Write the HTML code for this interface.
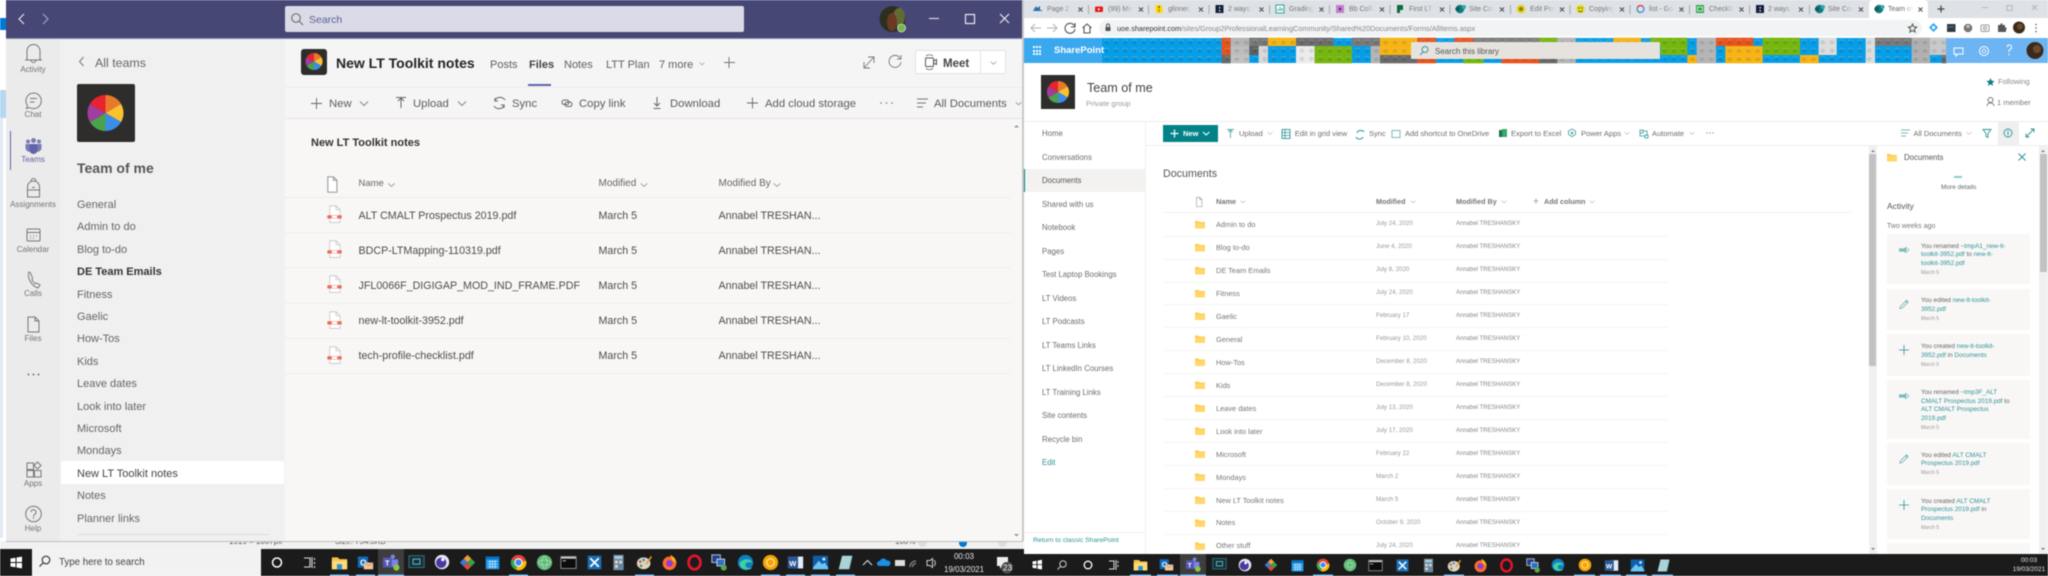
<!DOCTYPE html>
<html><head><meta charset="utf-8"><title>Teams and SharePoint</title>
<style>
html,body{margin:0;padding:0;width:2048px;height:576px;overflow:hidden;background:#fff}
#r{position:relative;width:2048px;height:576px;overflow:hidden;filter:blur(.55px);font-family:"Liberation Sans",sans-serif;background:#fff}
#r div{position:absolute}
#r p{position:absolute;margin:0;white-space:nowrap;line-height:0;color:#616161;font-size:11px}
svg{position:absolute;left:0;top:0}
.rl{width:54px;left:6px;text-align:center;font-size:8px!important;color:#747474!important}
.ch{font-size:11px!important;left:77px;color:#666!important}
.tb{font-size:11.3px!important;color:#5c5c5c!important}
.fl{font-size:10.7px!important;color:#4d4d4d!important}
.hd{font-size:10px!important;color:#666!important}
.tab{font-size:7px!important;color:#777!important;width:25px;height:10px;line-height:10px!important;margin-top:-5px!important;overflow:hidden;-webkit-mask-image:linear-gradient(90deg,#000 65%,transparent);mask-image:linear-gradient(90deg,#000 65%,transparent)}
.nav{left:1042px;font-size:7.8px!important;color:#6d6d6d!important}
.cmd{font-size:7.5px!important;color:#6d6d6d!important}
.nm{left:1216px;font-size:7.4px!important;color:#777!important}
.dt{left:1376px;font-size:6.2px!important;color:#999!important}
.by{left:1456px;font-size:6px!important;color:#888!important}
.c{left:1921px;font-size:6.4px!important;color:#666!important}
.c b{font-weight:400;color:#2f9496}
.cd{left:1921px;font-size:5px!important;color:#999!important}
.s{stroke:#666;fill:none;stroke-width:1}
</style></head><body><div id="r">

<!-- left-edge background -->
<div style="left:0;top:0;width:6px;height:541px;background:#fff"></div>
<div style="left:0;top:18px;width:6px;height:12px;background:#0078d4"></div>
<div style="left:0;top:90px;width:6px;height:28px;background:#b5d7ef"></div>
<div style="left:0;top:118px;width:3px;height:420px;background:#dfe8f3"></div>

<!-- strip behind Teams -->
<div style="left:0;top:541px;width:1024px;height:8px;background:#f1f1f1;overflow:hidden">
<p style="left:229px;top:1px;font-size:8px;color:#555">1919 × 1007px</p>
<p style="left:335px;top:1px;font-size:8px;color:#555">Size: 754.3KB</p>
<p style="left:895px;top:1px;font-size:8px;color:#555">100%</p>
<div style="left:959px;top:0;width:8px;height:6px;background:#0078d4;border-radius:0 0 4px 4px"></div>
<div style="left:918px;top:-3px;width:9px;height:9px;border-radius:50%;background:#ddd"></div>
<div style="left:998px;top:-3px;width:9px;height:9px;border-radius:50%;background:#ddd"></div>
</div>

<!-- Teams window -->
<div style="left:6px;top:0;width:1016px;height:38px;background:#464775"></div>
<div style="left:6px;top:38px;width:1016px;height:1px;background:#8a8bab"></div>
<div style="left:6px;top:39px;width:54px;height:502px;background:#ebebeb"></div>
<div style="left:60px;top:39px;width:225px;height:502px;background:#f0f0f0"></div>
<div style="left:285px;top:39px;width:737px;height:502px;background:#f8f7f6"></div>
<div style="left:285px;top:39px;width:737px;height:48px;background:#f5f5f5"></div>
<div style="left:285px;top:87px;width:737px;height:32px;background:#f5f5f5;border-top:1px solid #ececec;border-bottom:1px solid #e3e3e3;box-sizing:border-box"></div>
<div style="left:1022px;top:0;width:2px;height:541px;background:#c8c8c8"></div>
<div style="left:6px;top:541px;width:1017px;height:1px;background:#bdbdbd"></div>
<div style="left:61px;top:461px;width:223px;height:23px;background:#fff"></div>
<div style="left:77px;top:534px;width:192px;height:1px;background:#dcdcdc"></div>
<div style="left:10px;top:131px;width:1px;height:39px;background:#6264a7"></div>

<!-- Teams search -->
<div style="left:285px;top:6px;width:459px;height:26px;background:#dadbe6;border-radius:2px"></div>
<p style="left:309px;top:19.5px;font-size:10.5px;color:#5b5e9a">Search</p>

<!-- Team logos -->
<div style="left:77px;top:84px;width:58px;height:58px;background:#2f2d2c;border-radius:2px"></div>
<div style="left:301px;top:49px;width:26px;height:26px;background:#2f2d2c;border-radius:3px"></div>

<!-- Teams rows -->
<div style="left:285px;top:197px;width:726px;height:1px;background:#ececec"></div>
<div style="left:285px;top:232px;width:726px;height:1px;background:#eeeeee"></div>
<div style="left:285px;top:267px;width:726px;height:1px;background:#eeeeee"></div>
<div style="left:285px;top:303px;width:726px;height:1px;background:#eeeeee"></div>
<div style="left:285px;top:338px;width:726px;height:1px;background:#eeeeee"></div>
<div style="left:285px;top:373px;width:726px;height:1px;background:#eeeeee"></div>
<div style="left:528px;top:84px;width:23px;height:2px;background:#6264a7"></div>
<div style="left:915px;top:50px;width:91px;height:24px;background:#fff;border:1px solid #e3e3e3;border-radius:2px;box-sizing:border-box"></div>
<div style="left:980px;top:50px;width:1px;height:24px;background:#e3e3e3"></div>

<!-- Browser -->
<div style="left:1024px;top:0;width:1024px;height:18px;background:#dee1e6"></div>
<div style="left:1869px;top:0;width:59px;height:18px;background:#fff;border-radius:4px 4px 0 0"></div>
<div style="left:1024px;top:18px;width:1024px;height:20px;background:#fff"></div>
<div style="left:1099px;top:20px;width:823px;height:16px;background:#f1f3f4;border-radius:8px"></div>
<div style="left:1024px;top:63px;width:1024px;height:491px;background:#fff"></div>
<div style="left:1041px;top:75px;width:34px;height:34px;background:#2f2d2c"></div>
<div style="left:1024px;top:121px;width:1024px;height:1px;background:#ededed"></div>
<div style="left:1145px;top:122px;width:1px;height:432px;background:#f0f0f0"></div>
<div style="left:1146px;top:145px;width:902px;height:1px;background:#eeeeee"></div>
<div style="left:1024px;top:169px;width:121px;height:23px;background:#f3f2f1"></div>
<div style="left:1024px;top:169px;width:1px;height:23px;background:#038387"></div>
<div style="left:1024px;top:532px;width:121px;height:1px;background:#eeeeee"></div>
<div style="left:1163px;top:125px;width:55px;height:17px;background:#038387"></div>
<div style="left:1998px;top:121px;width:21px;height:24px;background:#efefef"></div>
<div style="left:1163px;top:212px;width:688px;height:1px;background:#efefef"></div>
<div style="left:1869px;top:146px;width:8px;height:408px;background:#f0f0f0"></div>
<div style="left:1869px;top:154px;width:7px;height:212px;background:#c2c2c2"></div>
<div style="left:2039px;top:146px;width:9px;height:408px;background:#f0f0f0"></div>
<div style="left:2040px;top:154px;width:7px;height:118px;background:#c2c2c2"></div>

<!-- doc rows separators -->
<div style="left:1163px;top:236px;width:505px;height:1px;background:#f4f4f4"></div>
<div style="left:1163px;top:259px;width:505px;height:1px;background:#f4f4f4"></div>
<div style="left:1163px;top:282px;width:505px;height:1px;background:#f4f4f4"></div>
<div style="left:1163px;top:304px;width:505px;height:1px;background:#f4f4f4"></div>
<div style="left:1163px;top:327px;width:505px;height:1px;background:#f4f4f4"></div>
<div style="left:1163px;top:350px;width:505px;height:1px;background:#f4f4f4"></div>
<div style="left:1163px;top:373px;width:505px;height:1px;background:#f4f4f4"></div>
<div style="left:1163px;top:396px;width:505px;height:1px;background:#f4f4f4"></div>
<div style="left:1163px;top:419px;width:505px;height:1px;background:#f4f4f4"></div>
<div style="left:1163px;top:442px;width:505px;height:1px;background:#f4f4f4"></div>
<div style="left:1163px;top:465px;width:505px;height:1px;background:#f4f4f4"></div>
<div style="left:1163px;top:488px;width:505px;height:1px;background:#f4f4f4"></div>
<div style="left:1163px;top:511px;width:505px;height:1px;background:#f4f4f4"></div>
<div style="left:1163px;top:534px;width:505px;height:1px;background:#f4f4f4"></div>

<!-- activity cards -->
<div style="left:1887px;top:234px;width:143px;height:50px;background:#f8f7f6"></div>
<div style="left:1887px;top:289px;width:143px;height:41px;background:#f8f7f6"></div>
<div style="left:1887px;top:334px;width:143px;height:42px;background:#f8f7f6"></div>
<div style="left:1887px;top:380px;width:143px;height:59px;background:#f8f7f6"></div>
<div style="left:1887px;top:443px;width:143px;height:42px;background:#f8f7f6"></div>
<div style="left:1887px;top:489px;width:143px;height:50px;background:#f8f7f6"></div>
<div style="left:1887px;top:543px;width:143px;height:11px;background:#f8f7f6"></div>

<!-- SVG layer: icons and banner -->
<svg width="2048" height="576" viewBox="0 0 2048 576">
<defs>
<symbol id="pie" viewBox="-10 -10 20 20">
<path d="M0 0L0-10A10 10 0 0 1 8.66-5Z" fill="#e8792b"/><path d="M0 0L8.66-5A10 10 0 0 1 8.66 5Z" fill="#fcc12f"/><path d="M0 0L8.66 5A10 10 0 0 1 0 10Z" fill="#3b8ee8"/><path d="M0 0L0 10A10 10 0 0 1-8.66 5Z" fill="#4aa34a"/><path d="M0 0L-8.66 5A10 10 0 0 1-8.66-5Z" fill="#a23ca0"/><path d="M0 0L-8.66-5A10 10 0 0 1 0-10Z" fill="#e8232f"/>
</symbol>
<symbol id="folder" viewBox="0 0 20 16"><path d="M0 1h7l2 2h11v13H0z" fill="#ffc94d"/><path d="M0 5h20v11H0z" fill="#ffd76b"/></symbol>
<symbol id="pdf" viewBox="0 0 20 24"><path d="M4 1h8l5 5v16H4z" fill="#fff" stroke="#c4c4c4"/><path d="M12 1v5h5" fill="none" stroke="#c4c4c4"/><rect x="1" y="13" width="18" height="4" fill="#e66a55"/><rect x="6.500" y="13.500" width="7" height="3" fill="#fff"/></symbol>
<symbol id="fileo" viewBox="0 0 20 24"><path d="M4 1h8l5 5v17H4z" fill="#fff" stroke="#8a8a8a" stroke-width="1.3"/><path d="M12 1v5h5" fill="none" stroke="#8a8a8a" stroke-width="1.3"/></symbol>
<symbol id="chv" viewBox="0 0 10 6"><path d="M1 1l4 4 4-4" fill="none" stroke="#888" stroke-width="1"/></symbol>
<symbol id="chvd" viewBox="0 0 10 6"><path d="M1 1l4 4 4-4" fill="none" stroke="#777" stroke-width=".8"/></symbol>
<symbol id="plus" viewBox="0 0 12 12"><path d="M6 0v12M0 6h12" stroke="#666" stroke-width="1" fill="none"/></symbol>
<symbol id="tplus" viewBox="0 0 12 12"><path d="M6 0v12M0 6h12" stroke="#2f9496" stroke-width="1" fill="none"/></symbol>
<symbol id="pen" viewBox="0 0 12 12"><path d="M1 11l1-3 7-7 2 2-7 7zM8 2l2 2" stroke="#5aa9aa" stroke-width=".9" fill="none"/></symbol>
<symbol id="ren" viewBox="0 0 12 12"><path d="M0 4h6l3-2v8L6 8H0z" fill="#7dbcbd"/><path d="M10 4l2 2-2 2" stroke="#7dbcbd" fill="none"/></symbol>

<symbol id="t-exp" viewBox="0 0 20 20"><path d="M1 4h7l2 2h9v12H1z" fill="#f6c445"/><path d="M1 8h18v10H1z" fill="#fcdc7a"/><rect x="7" y="12" width="6" height="6" fill="#2d8fd6"/></symbol>
<symbol id="t-out" viewBox="0 0 20 20"><rect x="1" y="3" width="12" height="13" fill="#0f6cbd"/><text x="3.5" y="13.5" font-size="10" font-weight="700" fill="#fff" font-family="Liberation Sans">O</text><rect x="8" y="10" width="11" height="8" fill="#f2c89a"/><path d="M8 10l5.5 4 5.5-4" stroke="#c99660" fill="none"/></symbol>
<symbol id="t-tea" viewBox="0 0 20 20"><rect x="1" y="4" width="11" height="11" fill="#5558af"/><text x="3.5" y="13" font-size="8" font-weight="700" fill="#fff" font-family="Liberation Sans">T</text><circle cx="12" cy="3" r="2.4" fill="#7b83eb"/><path d="M11 6h7v8h-7z" fill="#7b83eb"/><circle cx="16" cy="15" r="3.5" fill="#8cc63f"/></symbol>
<symbol id="t-vs" viewBox="0 0 20 20"><rect x="1" y="2" width="18" height="14" fill="#14323a" stroke="#3a7a85"/><rect x="6" y="6" width="8" height="6" fill="none" stroke="#7fd0d8"/></symbol>
<symbol id="t-pur" viewBox="0 0 20 20"><circle cx="10" cy="10" r="9" fill="#e8e4f6"/><circle cx="9" cy="11" r="6.5" fill="#4b3a9e"/><circle cx="11" cy="7" r="2" fill="#fff"/></symbol>
<symbol id="t-git" viewBox="0 0 20 20"><path d="M10 1l4.500 4.500L10 10 5.500 5.500z" fill="#f0a030"/><path d="M14.500 5.500L19 10l-4.500 4.500L10 10z" fill="#2ba84a"/><path d="M5.500 5.500L10 10l-4.500 4.500L1 10z" fill="#3a7ad9"/><path d="M10 10l4.500 4.500L10 19l-4.500-4.500z" fill="#d94a3a"/></symbol>
<symbol id="t-cal" viewBox="0 0 20 20"><rect x="2" y="3" width="16" height="15" fill="#1490e8"/><rect x="2" y="3" width="16" height="3" fill="#0a6fc0"/><path d="M4 9h12M4 12h12M4 15h12M7 7v10M10 7v10M13 7v10" stroke="#cfe8fb" stroke-width=".9"/></symbol>
<symbol id="t-chr" viewBox="0 0 20 20"><circle cx="10" cy="10" r="9" fill="#e84335"/><path d="M10 10L2 6A9 9 0 0 0 7 18.500z" fill="#34a853"/><path d="M10 10l-3 8.500A9 9 0 0 0 19 8z" fill="#fbbc05"/><circle cx="10" cy="10" r="4.300" fill="#4285f4" stroke="#fff" stroke-width="1.300"/></symbol>
<symbol id="t-ato" viewBox="0 0 20 20"><circle cx="10" cy="10" r="9" fill="#5fb875"/><ellipse cx="10" cy="10" rx="7" ry="3" fill="none" stroke="#b9e6c4" stroke-width=".7"/><ellipse cx="10" cy="10" rx="3" ry="7" fill="none" stroke="#b9e6c4" stroke-width=".7"/></symbol>
<symbol id="t-ter" viewBox="0 0 20 20"><rect x="1" y="3" width="18" height="14" fill="#0c0c0c" stroke="#9a9a9a"/><rect x="1.500" y="3.500" width="17" height="2" fill="#cfcfcf"/><path d="M3 8h4" stroke="#ddd"/></symbol>
<symbol id="t-too" viewBox="0 0 20 20"><rect x="2" y="2" width="16" height="16" fill="#1a6fb5"/><path d="M5 5l10 10M15 5L5 15" stroke="#fff" stroke-width="2"/></symbol>
<symbol id="t-cal2" viewBox="0 0 20 20"><rect x="4" y="1" width="12" height="18" fill="#7d8a94"/><rect x="5.500" y="2.500" width="9" height="3" fill="#9ed4f5"/><path d="M6 8h3v3H6zM11 8h3v3h-3zM6 13h3v3H6z" fill="#dde4e8"/><rect x="11" y="13" width="3" height="4" fill="#2d8fd6"/></symbol>
<symbol id="t-pai" viewBox="0 0 20 20"><ellipse cx="9" cy="11" rx="8" ry="7" fill="#dcd3c2"/><circle cx="5" cy="9" r="1.500" fill="#d94a3a"/><circle cx="9" cy="7" r="1.500" fill="#2d8fd6"/><circle cx="6" cy="14" r="1.500" fill="#2ba84a"/><path d="M12 12l6-9" stroke="#e0a030" stroke-width="2"/></symbol>
<symbol id="t-ffx" viewBox="0 0 20 20"><circle cx="10" cy="11" r="8" fill="#ff6a2b"/><circle cx="10" cy="11" r="4" fill="#8b3fd0"/><path d="M11 1c4 2 7 5 7 10l-5-4z" fill="#ffb31a"/></symbol>
<symbol id="t-ope" viewBox="0 0 20 20"><ellipse cx="10" cy="10" rx="7" ry="8" fill="none" stroke="#e5152b" stroke-width="3.200"/></symbol>
<symbol id="t-net" viewBox="0 0 20 20"><rect x="1" y="1" width="10" height="9" fill="#26408e" stroke="#c9d4e8"/><rect x="7" y="6" width="9" height="8" fill="#2d6fc4" stroke="#e1e6ee"/><circle cx="15" cy="16" r="3.500" fill="#5aa84a"/></symbol>
<symbol id="t-edg" viewBox="0 0 20 20"><circle cx="10" cy="10" r="9" fill="#0f7fc4"/><path d="M3 12c1-7 14-8 15-1-2-2-7-2-8 1-1 3 3 6 8 4-3 4-14 3-15-4z" fill="#3fd1a0"/></symbol>
<symbol id="t-ora" viewBox="0 0 20 20"><circle cx="10" cy="10" r="9" fill="#f4a400"/><circle cx="10" cy="10" r="4.500" fill="none" stroke="#ffe0a0" stroke-width="1.500"/></symbol>
<symbol id="t-wrd" viewBox="0 0 20 20"><rect x="8" y="3" width="11" height="14" fill="#e5edf8"/><rect x="1" y="3" width="12" height="14" fill="#2b579a"/><text x="2.500" y="14" font-size="9" font-weight="700" fill="#fff" font-family="Liberation Sans">W</text></symbol>
<symbol id="t-pho" viewBox="0 0 20 20"><rect x="1" y="2" width="18" height="16" fill="#0f5ea8"/><path d="M1 16l7-8 4 4 3-2 4 6v2H1z" fill="#6dc3f2"/><circle cx="14" cy="6" r="1.800" fill="#cfeafc"/></symbol>
<symbol id="t-not" viewBox="0 0 20 20"><path d="M6 2h12l-4 16H2z" fill="#a8d4d8"/><path d="M14 18l4-16v2l-3 14z" fill="#5b8f96"/></symbol>

<pattern id="dots" width="9.300" height="8.330" patternUnits="userSpaceOnUse" x="1102" y="38"><circle cx="4.650" cy="4.100" r="2.500" fill="#000" fill-opacity=".09"/><path d="M2.400 3.300a2.500 2.500 0 0 1 4.500 0" stroke="#fff" stroke-opacity=".35" fill="none" stroke-width=".6"/></pattern>
</defs>

<!-- lego banner: coordinates taken from the 3x crops -->
<rect x="1102" y="38" width="946" height="25" fill="#079ee8"/>
<g transform="translate(1020,0) scale(.33333)">
<rect x="605" y="113" width="27" height="25" fill="#e8541f"/><rect x="632" y="113" width="56" height="25" fill="#b5b5b5"/><rect x="688" y="113" width="56" height="25" fill="#7a7a7a"/><rect x="744" y="113" width="84" height="25" fill="#f7b413"/><rect x="828" y="113" width="112" height="25" fill="#6e6e6e"/><rect x="996" y="113" width="84" height="25" fill="#7a7a7a"/><rect x="1080" y="113" width="112" height="25" fill="#f7b413"/><rect x="1192" y="113" width="56" height="25" fill="#e8541f"/><rect x="1303" y="113" width="57" height="25" fill="#e8541f"/><rect x="1360" y="113" width="200" height="25" fill="#7d7d7d"/>
<rect x="605" y="138" width="27" height="27" fill="#e8541f"/><rect x="632" y="138" width="56" height="27" fill="#bdbdbd"/><rect x="688" y="138" width="28" height="27" fill="#5f5f5f"/><rect x="716" y="138" width="28" height="27" fill="#d9d9d9"/><rect x="828" y="138" width="56" height="27" fill="#ececec"/><rect x="884" y="138" width="112" height="27" fill="#76b70f"/><rect x="1052" y="138" width="28" height="27" fill="#b5b5b5"/><rect x="1080" y="138" width="112" height="27" fill="#f7b413"/>
<rect x="605" y="165" width="27" height="25" fill="#6a6a6a"/><rect x="632" y="165" width="56" height="25" fill="#c2c2c2"/><rect x="716" y="165" width="28" height="25" fill="#d9d9d9"/><rect x="828" y="165" width="56" height="25" fill="#ececec"/><rect x="884" y="165" width="112" height="25" fill="#76b70f"/><rect x="1052" y="165" width="28" height="25" fill="#b5b5b5"/><rect x="1080" y="165" width="112" height="25" fill="#6a6a6a"/><rect x="1192" y="165" width="56" height="25" fill="#e8541f"/><rect x="1330" y="165" width="60" height="25" fill="#76b70f"/><rect x="1445" y="165" width="115" height="25" fill="#e8541f"/>
</g>
<g transform="translate(1530,0) scale(.33333)">
<rect x="27" y="113" width="55" height="25" fill="#76b70f"/><rect x="82" y="113" width="55" height="25" fill="#b5b5b5"/><rect x="250" y="113" width="83" height="25" fill="#f7b413"/><rect x="360" y="113" width="112" height="25" fill="#76b70f"/><rect x="500" y="113" width="58" height="25" fill="#b5b5b5"/><rect x="558" y="113" width="112" height="25" fill="#e8541f"/><rect x="698" y="113" width="112" height="25" fill="#76b70f"/><rect x="866" y="113" width="54" height="25" fill="#dedede"/><rect x="1007" y="113" width="28" height="25" fill="#dedede"/><rect x="1035" y="113" width="110" height="25" fill="#7a7a7a"/><rect x="1145" y="113" width="55" height="25" fill="#b0b0b0"/><rect x="1200" y="113" width="50" height="25" fill="#c9c9c9"/>
<rect x="392" y="138" width="80" height="27" fill="#76b70f"/><rect x="500" y="138" width="58" height="27" fill="#b5b5b5"/><rect x="586" y="138" width="112" height="27" fill="#f7b413"/><rect x="698" y="138" width="112" height="27" fill="#76b70f"/><rect x="866" y="138" width="54" height="27" fill="#dedede"/><rect x="1007" y="138" width="28" height="27" fill="#dedede"/><rect x="1145" y="138" width="55" height="27" fill="#b0b0b0"/><rect x="1200" y="138" width="50" height="27" fill="#c9c9c9"/>
<rect x="0" y="165" width="27" height="25" fill="#e8541f"/><rect x="27" y="165" width="55" height="25" fill="#6a6a6a"/><rect x="82" y="165" width="55" height="25" fill="#b5b5b5"/><rect x="472" y="165" width="28" height="25" fill="#f7b413"/><rect x="500" y="165" width="58" height="25" fill="#b5b5b5"/><rect x="586" y="165" width="112" height="25" fill="#f7b413"/><rect x="810" y="165" width="56" height="25" fill="#f7b413"/><rect x="1007" y="165" width="28" height="25" fill="#dedede"/><rect x="1145" y="165" width="55" height="25" fill="#b0b0b0"/><rect x="1235" y="165" width="15" height="25" fill="#6a6a6a"/>
</g>
<rect x="1102" y="38" width="844" height="25" fill="url(#dots)"/>
<rect x="1024" y="38" width="78" height="25" fill="#3aa8ee"/>
<rect x="1946" y="38" width="102" height="25" fill="#6db4f3"/>
<rect x="1411" y="42" width="249" height="17" fill="#e6e3df" rx="1"/>
<!-- sharepoint top icons -->
<g fill="#fff"><rect x="1033" y="46" width="2" height="2"/><rect x="1036" y="46" width="2" height="2"/><rect x="1039" y="46" width="2" height="2"/><rect x="1033" y="50" width="2" height="2"/><rect x="1036" y="50" width="2" height="2"/><rect x="1039" y="50" width="2" height="2"/><rect x="1033" y="53" width="2" height="2"/><rect x="1036" y="53" width="2" height="2"/><rect x="1039" y="53" width="2" height="2"/></g>
<circle cx="1425" cy="49.500" r="3" fill="none" stroke="#3b8ea0" stroke-width=".9"/><path d="M1423 52l-3 3" stroke="#3b8ea0"/>
<path d="M1954 48h9v6h-5l-2 2v-2h-2z" fill="none" stroke="#fff" stroke-width="1"/>
<circle cx="1984" cy="51" r="4.500" fill="none" stroke="#fff" stroke-width="1"/><circle cx="1984" cy="51" r="1.800" fill="none" stroke="#fff" stroke-width=".8"/>
<path d="M2007 47a2.300 2.300 0 1 1 3 2.500c-1 .6-1 1-1 2.500" stroke="#fff" fill="none"/><circle cx="2009" cy="54.500" r=".7" fill="#fff"/>
<circle cx="2035" cy="50.500" r="8.500" fill="#3b2a1c"/><circle cx="2037" cy="49" r="4" fill="#6a4a2c"/>

<!-- Teams nav + window icons -->
<path d="M24 14l-5 5 5 5" stroke="#e8e8f2" stroke-width="1.100" fill="none"/><path d="M43 14l5 5-5 5" stroke="#a8a9c4" stroke-width="1.100" fill="none"/>
<circle cx="296" cy="18" r="4.300" fill="none" stroke="#666" stroke-width="1"/><path d="M299 21l4 4" stroke="#666" stroke-width="1"/>
<circle cx="892.500" cy="19" r="13" fill="#2c2f1f"/><ellipse cx="899" cy="17" rx="6" ry="9" fill="#6e7a3a" opacity=".8"/><ellipse cx="892" cy="22" rx="5" ry="9" fill="#6b3a22"/><circle cx="901.500" cy="28" r="4" fill="#7ab648" stroke="#fff" stroke-width=".6"/>
<path d="M929 18.500h10" stroke="#d4d4e4" stroke-width="1.200"/><rect x="965.500" y="14.500" width="9" height="9" fill="none" stroke="#e8e8f2" stroke-width="1.200"/><path d="M1000 14l9 9m0-9l-9 9" stroke="#e8e8f2" stroke-width="1.200"/>

<!-- rail icons -->
<g class="s" stroke="#777" fill="none">
<path d="M27 60v-9a6.500 6.500 0 0 1 13 0v9zM25 60h17M31 60a2.500 2.500 0 0 0 5 0" stroke="#777"/>
<path d="M33.500 93a7.800 7.800 0 1 1-4 14.500l-3 1 1-3a7.800 7.800 0 0 1 6-12.500zM30 98.500h7M30 102h4.500" stroke="#777"/>
<path d="M27.500 197v-10a6 6 0 0 1 12 0v10zM31 181a2.500 2.500 0 0 1 5 0M27.500 190h12M32 187.500h3" stroke="#777"/>
<rect x="27" y="229" width="13" height="12" rx="1" stroke="#777"/><path d="M27 232.500h13" stroke="#777"/><path d="M30 236h1m2 0h1m2 0h1M30 238.500h1m2 0h1" stroke="#777"/>
<path d="M29 272c-1 2-1 5 1 9s5 6 8 7l2-3-3.500-2-1.500 1-3-4 .5-2-2-5z" stroke="#777"/>
<path d="M28 317h7l4 4v11H28z" stroke="#777"/><path d="M35 317v4h4" stroke="#777"/>
<rect x="27" y="463" width="6.500" height="6.500" stroke="#777"/><rect x="27" y="470.500" width="6.500" height="6.500" stroke="#777"/><rect x="34.500" y="470.500" width="6.500" height="6.500" stroke="#777"/><path d="M37.500 462l3.500 3.500-3.500 3.500-3.500-3.500z" stroke="#777"/>
<circle cx="33.500" cy="514" r="7.800" stroke="#777"/><path d="M31 512a2.500 2.500 0 1 1 3.500 2.500c-1 .6-1 1-1 2" stroke="#777"/>
</g>
<circle cx="33.500" cy="518" r=".7" fill="#777"/>
<g fill="#7a7cb8"><circle cx="33.500" cy="140.500" r="2.500"/><circle cx="39" cy="141.500" r="2"/><circle cx="28" cy="141.500" r="2"/></g>
<path d="M25.500 144h4v5c0 2 1 3 1 3-3 0-5-2-5-4zM41.500 144h-4v5c0 2-1 3-1 3 3 0 5-2 5-4z" fill="#7a7cb8"/><path d="M29.500 144h8v6a4 4 0 0 1-8 0z" fill="#6264a7"/>
<g fill="#777"><circle cx="28.500" cy="374.500" r="1"/><circle cx="33.500" cy="374.500" r="1"/><circle cx="38.500" cy="374.500" r="1"/></g>
<path d="M83.500 57l-4 4.500 4 4.500" stroke="#777" fill="none"/>

<!-- logos -->
<use href="#pie" x="87.500" y="95" width="36" height="36"/>
<use href="#pie" x="305.500" y="53" width="17" height="17"/>
<use href="#pie" x="1047" y="81" width="22" height="22"/>

<!-- Teams header right -->
<path d="M864 68l10-11M868 57h6v6M864 62v6h6" fill="none" stroke="#777" stroke-width=".9"/>
<path d="M900 58a6 6 0 1 0 1 4M901 55v4h-4" fill="none" stroke="#777" stroke-width=".9"/>
<rect x="925.500" y="58" width="8" height="8.500" rx="1" fill="none" stroke="#555"/><path d="M933.500 61l3-1.500v5l-3-1.500" fill="none" stroke="#555"/><path d="M926 56a6 6 0 0 1 7 0M926 68.500a6 6 0 0 0 7 0" stroke="#555" fill="none" stroke-width=".8"/>
<use href="#chv" x="990" y="61" width="7" height="4"/>
<use href="#chv" x="699" y="62" width="6" height="3.500"/>
<path d="M729 57v11M724 62.500h11" stroke="#777" fill="none"/>

<!-- Teams toolbar icons -->
<use href="#plus" x="311" y="98" width="11" height="11"/>
<use href="#chv" x="359" y="100.500" width="10" height="6"/>
<path d="M396 97.500h10M401 108v-10M398 101l3-3 3 3" stroke="#666" fill="none"/>
<use href="#chv" x="457" y="100.500" width="10" height="6"/>
<path d="M505 100a6 6 0 0 0-10.500 1M494 106a6 6 0 0 0 10.500-1M495 98v3h3M504 108v-3h-3" stroke="#666" fill="none"/>
<rect x="562" y="100" width="7" height="4.500" rx="2.200" fill="none" stroke="#666"/><rect x="565" y="102" width="7" height="4.500" rx="2.200" fill="none" stroke="#666"/>
<path d="M657 97v9M654 103l3 3 3-3M653.500 108.500h7" stroke="#666" fill="none"/>
<use href="#plus" x="747" y="97.500" width="11" height="11"/>
<g fill="#777"><circle cx="881" cy="103" r=".8"/><circle cx="886.500" cy="103" r=".8"/><circle cx="892" cy="103" r=".8"/></g>
<path d="M917 99h11M917 103h9M917 107h6" stroke="#777" fill="none"/>
<use href="#chv" x="1015" y="100.500" width="7" height="6"/>

<!-- Teams list -->
<use href="#fileo" x="325" y="176" width="14" height="17"/>
<use href="#chvd" x="387.500" y="182.500" width="8" height="5"/>
<use href="#chvd" x="640" y="182.500" width="8" height="5"/>
<use href="#chvd" x="773" y="182.500" width="8" height="5"/>
<use href="#pdf" x="326" y="205" width="17" height="19"/>
<use href="#pdf" x="326" y="240" width="17" height="19"/>
<use href="#pdf" x="326" y="275" width="17" height="19"/>
<use href="#pdf" x="326" y="311" width="17" height="19"/>
<use href="#pdf" x="326" y="346" width="17" height="19"/>
<path d="M1014 127.500h5l-2.500-2.500zM1014 534h5l-2.500 2.500z" fill="#999"/>

<!-- Chrome icons -->
<path d="M1031 28h10M1035 24l-4 4 4 4" stroke="#b0b0b0" fill="none"/><path d="M1047 28h10M1053 24l4 4-4 4" stroke="#b0b0b0" fill="none"/>
<path d="M1074.500 26a5 5 0 1 0 .5 3M1075 23v4h-4" stroke="#555" fill="none" stroke-width="1.100"/>
<path d="M1082.500 28l4.500-4 4.500 4M1084 27v6h6v-6" stroke="#555" fill="none" stroke-width="1.100"/>
<rect x="1105.500" y="27" width="5" height="4" fill="#555"/><path d="M1106.500 27v-1.500a1.500 1.500 0 0 1 3 0V27" stroke="#555" fill="none"/>
<path d="M1912.500 24l1.200 2.800 3 .3-2.300 2 .7 3-2.600-1.600-2.600 1.600.7-3-2.300-2 3-.3z" stroke="#555" fill="none"/>
<path d="M1933.500 23l4.500 4.500-4.500 4.500-4.500-4.500z" fill="#2ba6f0"/><circle cx="1933.500" cy="27.500" r="1.600" fill="#fff"/>
<rect x="1947" y="24" width="8.500" height="8" fill="#2f3a44"/><path d="M1948 27h6" stroke="#9ab" stroke-dasharray="1 1"/>
<circle cx="1968" cy="28" r="4.300" fill="#777"/><circle cx="1968" cy="26.500" r="1.500" fill="#ccc"/>
<rect x="1981" y="25" width="8" height="6.500" rx="1" fill="none" stroke="#999" stroke-width="1"/><circle cx="1985" cy="28.200" r="1.500" fill="none" stroke="#999"/>
<path d="M1998 25h2.500v-1.500h2V25h2.500v2.500h1.500v2H2006v2.500h-8z" fill="#555"/>
<circle cx="2019" cy="27.500" r="6" fill="#3b2a1c"/><circle cx="2020" cy="26.500" r="3" fill="#6a4a2c"/>
<g fill="#555"><circle cx="2036" cy="24.500" r=".8"/><circle cx="2036" cy="28" r=".8"/><circle cx="2036" cy="31.500" r=".8"/></g>

<!-- tab favicons -->
<path d="M1033 11l3-5 1 2 3-2v4h2v1z" fill="#2a6fa8"/>
<rect x="1095" y="6.500" width="8" height="5.500" rx="1.300" fill="#e61a1a"/><path d="M1098 8l2.300 1.300-2.300 1.300z" fill="#fff"/>
<rect x="1155.500" y="5" width="7" height="8" rx="1" fill="#ffe000"/><path d="M1158 6h2v2h-2z" fill="#8a6a1e"/><path d="M1158 9h2v3h-2z" fill="#c69a2a"/>
<rect x="1215.500" y="5" width="8" height="8" fill="#14213d"/><rect x="1219" y="7" width="1.200" height="1.500" fill="#fff"/><rect x="1219" y="10" width="1.200" height="1.500" fill="#fff"/>
<rect x="1276" y="5" width="8" height="8" fill="#fff" stroke="#2aa198"/><path d="M1278 11V9M1280 11V7M1282 11V8" stroke="#2aa198"/>
<rect x="1336" y="5" width="8" height="8" fill="#c67fd0"/><path d="M1339 7l3 2-3 2z" fill="#5a2a7a"/>
<path d="M1397 5h6v5h-3v3h-3z" fill="#0c6b3e"/>
<circle cx="1460" cy="9" r="4.300" fill="#107c7e"/><circle cx="1457.500" cy="9" r="2.200" fill="#0d5c5e"/><circle cx="1464" cy="7" r="2" fill="#35a9ab"/>
<circle cx="1521" cy="9" r="4.300" fill="#e6d118"/><circle cx="1521" cy="9" r="2" fill="#8a7a10"/>
<circle cx="1580.500" cy="9" r="4.300" fill="#e8dc1b"/><circle cx="1579" cy="8" r=".7" fill="#444"/><circle cx="1582" cy="8" r=".7" fill="#444"/><path d="M1578.500 10.500a2.200 2.200 0 0 0 4 0" stroke="#444" fill="none" stroke-width=".7"/>
<circle cx="1640.500" cy="9" r="3.400" fill="none" stroke="#4285f4" stroke-width="1.300"/><path d="M1643 6.500a3.400 3.400 0 0 0-5.500 1" stroke="#ea4335" fill="none" stroke-width="1.300"/><path d="M1637.500 10.500a3.400 3.400 0 0 0 2 2" stroke="#34a853" fill="none" stroke-width="1.300"/>
<rect x="1696" y="5" width="8" height="8" fill="#2fa84f"/><rect x="1697.500" y="7" width="5" height="4" fill="none" stroke="#fff" stroke-width=".7"/>
<rect x="1756" y="5" width="8" height="8" fill="#14213d"/><rect x="1759.500" y="7" width="1.200" height="1.500" fill="#fff"/><rect x="1759.500" y="10" width="1.200" height="1.500" fill="#fff"/>
<circle cx="1819.500" cy="9" r="4.300" fill="#107c7e"/><circle cx="1817" cy="9" r="2.200" fill="#0d5c5e"/><circle cx="1823" cy="7" r="2" fill="#35a9ab"/>
<circle cx="1879" cy="9" r="4.300" fill="#107c7e"/><circle cx="1876.500" cy="9" r="2.200" fill="#0d5c5e"/><circle cx="1882.500" cy="7" r="2" fill="#35a9ab"/>
<g stroke="#444" stroke-width="1" fill="none">
<path d="M1078.500 7.500l4 4m0-4l-4 4M1139 7.500l4 4m0-4l-4 4M1199 7.500l4 4m0-4l-4 4M1259.500 7.500l4 4m0-4l-4 4M1319.500 7.500l4 4m0-4l-4 4M1380 7.500l4 4m0-4l-4 4M1440 7.500l4 4m0-4l-4 4M1500 7.500l4 4m0-4l-4 4M1560 7.500l4 4m0-4l-4 4M1620 7.500l4 4m0-4l-4 4M1679.500 7.500l4 4m0-4l-4 4M1739.500 7.500l4 4m0-4l-4 4M1799 7.500l4 4m0-4l-4 4M1859 7.500l4 4m0-4l-4 4M1918.500 7.500l4 4m0-4l-4 4"/>
</g>
<g stroke="#9a9da1" stroke-width=".8"><path d="M1088.500 5v9M1148.500 5v9M1209 5v9M1269.500 5v9M1329.500 5v9M1390 5v9M1450 5v9M1510.500 5v9M1570 5v9M1630 5v9M1689.500 5v9M1749.500 5v9M1809.500 5v9"/></g>
<path d="M1941 5.500v7M1937.500 9h7" stroke="#444" stroke-width="1.200"/>
<path d="M1982 7.500h6" stroke="#b4b6ba"/><rect x="2007" y="5.500" width="5" height="5" fill="none" stroke="#b4b6ba"/><path d="M2032 5l5 5m0-5l-5 5" stroke="#b4b6ba"/>

<!-- SP right header -->
<path d="M1990.500 78l1.200 2.700 2.900.3-2.200 2 .7 2.900-2.600-1.600-2.600 1.600.7-2.900-2.200-2 2.900-.3z" fill="#107c7e"/>
<circle cx="1990.500" cy="100" r="2.500" fill="none" stroke="#777"/><path d="M1987 106c0-4 7-4 7 0" stroke="#777" fill="none"/>

<!-- SP command bar -->
<path d="M1174.500 129.500v8M1170.500 133.500h8" stroke="#fff" stroke-width="1.200"/><path d="M1203 132l3.200 3 3.200-3" stroke="#fff" fill="none" stroke-width="1.100"/>
<path d="M1227 129.500h7M1230.500 138v-8M1228.500 132l2-2 2 2" stroke="#5aa9aa" fill="none" stroke-width=".9"/>
<use href="#chvd" x="1267" y="131.500" width="6" height="3.500"/>
<rect x="1282" y="129.500" width="8" height="9" fill="none" stroke="#2f9496" stroke-width=".9"/><path d="M1282 132.500h8M1282 135.500h8M1285 129.500v9" stroke="#2f9496" stroke-width=".8"/>
<path d="M1364 132a4 4 0 0 0-7 1M1356 137a4 4 0 0 0 7 0" stroke="#2f9496" fill="none"/>
<rect x="1392" y="130.500" width="8" height="7" fill="none" stroke="#5aa9aa" stroke-width=".8"/>
<rect x="1499" y="130" width="7" height="7" fill="#1d7044"/><rect x="1502" y="129" width="5" height="8" fill="#33a96c"/>
<path d="M1572 129l3.500 2v3.500l-3.500 2-3.500-2V131z" fill="none" stroke="#5aa9aa"/><circle cx="1572" cy="133" r="1.300" fill="#5aa9aa"/>
<use href="#chvd" x="1624" y="131.500" width="6" height="3.500"/>
<path d="M1640 130h3v3h-3zM1645 135h3v3h-3zM1643 131h4v4M1640 133v3h5" stroke="#2f9496" fill="none" stroke-width=".8"/>
<use href="#chvd" x="1689" y="131.500" width="6" height="3.500"/>
<g fill="#777"><circle cx="1707" cy="133" r=".6"/><circle cx="1710" cy="133" r=".6"/><circle cx="1713" cy="133" r=".6"/></g>
<path d="M1901 130h9M1901 133h7M1901 136h5" stroke="#7ab8ba"/>
<use href="#chvd" x="1966" y="131.500" width="6" height="3.500"/>
<path d="M1983 129.500h8l-3 4v4l-2-1v-3z" fill="none" stroke="#2f9496" stroke-width=".9"/>
<circle cx="2008" cy="133" r="4" fill="none" stroke="#2f9496" stroke-width=".9"/><path d="M2008 132v3M2008 130.500v1" stroke="#2f9496"/>
<path d="M2026 137l8-8M2030.500 129h3.500v3.500M2026 133.500v3.500h3.500" stroke="#2f9496" fill="none" stroke-width=".9"/>

<!-- SP list -->
<use href="#fileo" x="1194" y="197" width="10" height="10"/>
<use href="#chvd" x="1240" y="200" width="6" height="3.500"/>
<use href="#chvd" x="1410" y="200" width="6" height="3.500"/>
<use href="#chvd" x="1501" y="200" width="6" height="3.500"/>
<use href="#chvd" x="1589" y="200" width="6" height="3.500"/>
<path d="M1536 198.500v5M1533.500 201h5" stroke="#999" stroke-width=".8"/>
<use href="#folder" x="1195" y="220.500" width="10" height="8"/>
<use href="#folder" x="1195" y="243.500" width="10" height="8"/>
<use href="#folder" x="1195" y="266.500" width="10" height="8"/>
<use href="#folder" x="1195" y="289.500" width="10" height="8"/>
<use href="#folder" x="1195" y="312" width="10" height="8"/>
<use href="#folder" x="1195" y="335" width="10" height="8"/>
<use href="#folder" x="1195" y="358" width="10" height="8"/>
<use href="#folder" x="1195" y="381" width="10" height="8"/>
<use href="#folder" x="1195" y="404" width="10" height="8"/>
<use href="#folder" x="1195" y="427" width="10" height="8"/>
<use href="#folder" x="1195" y="450" width="10" height="8"/>
<use href="#folder" x="1195" y="473" width="10" height="8"/>
<use href="#folder" x="1195" y="496" width="10" height="8"/>
<use href="#folder" x="1195" y="519" width="10" height="8"/>
<use href="#folder" x="1195" y="542" width="10" height="8"/>

<!-- SP scroll arrows / panel -->
<path d="M1871 152h4l-2-2zM2041 152h4l-2-2zM1871 548h4l-2 2zM2041 548h4l-2 2z" fill="#777"/>
<use href="#folder" x="1887" y="153.500" width="10" height="8"/>
<path d="M2018.500 153.500l7 7m0-7l-7 7" stroke="#2f9496" fill="none"/>
<rect x="1954" y="176" width="8" height="2" fill="#8ccbcc"/>
<use href="#ren" x="1899" y="245" width="10" height="10"/>
<use href="#pen" x="1899" y="299.500" width="10" height="10"/>
<use href="#tplus" x="1899" y="345" width="10" height="10"/>
<use href="#ren" x="1899" y="391" width="10" height="10"/>
<use href="#pen" x="1899" y="454" width="10" height="10"/>
<use href="#tplus" x="1899" y="500" width="10" height="10"/>
</svg>

<!-- Teams text -->
<p class="rl" style="top:70px">Activity</p>
<p class="rl" style="top:115px">Chat</p>
<p class="rl" style="top:160px;color:#6264a7!important">Teams</p>
<p class="rl" style="top:205px">Assignments</p>
<p class="rl" style="top:249.500px">Calendar</p>
<p class="rl" style="top:294px">Calls</p>
<p class="rl" style="top:339px">Files</p>
<p class="rl" style="top:484px">Apps</p>
<p class="rl" style="top:528.500px">Help</p>
<p style="left:95px;top:62.500px;font-size:12.400px;color:#666">All teams</p>
<p style="left:77px;top:168px;font-size:14px;font-weight:700;color:#565656">Team of me</p>
<p class="ch" style="top:204.500px">General</p>
<p class="ch" style="top:227px">Admin to do</p>
<p class="ch" style="top:249.500px">Blog to-do</p>
<p class="ch" style="top:272px;font-weight:700;color:#333!important">DE Team Emails</p>
<p class="ch" style="top:294.500px">Fitness</p>
<p class="ch" style="top:317px">Gaelic</p>
<p class="ch" style="top:339px">How-Tos</p>
<p class="ch" style="top:361.500px">Kids</p>
<p class="ch" style="top:384px">Leave dates</p>
<p class="ch" style="top:406.500px">Look into later</p>
<p class="ch" style="top:429px">Microsoft</p>
<p class="ch" style="top:451px">Mondays</p>
<p class="ch" style="top:473.500px;color:#444!important">New LT Toolkit notes</p>
<p class="ch" style="top:496px">Notes</p>
<p class="ch" style="top:518.500px">Planner links</p>

<p style="left:336px;top:63px;font-size:14px;font-weight:700;color:#252423">New LT Toolkit notes</p>
<p style="left:490px;top:64.500px">Posts</p>
<p style="left:529px;top:64.500px;font-weight:700;color:#444">Files</p>
<p style="left:564px;top:64.500px">Notes</p>
<p style="left:606px;top:64.500px">LTT Plan</p>
<p style="left:659px;top:64.500px">7 more</p>
<p style="left:943px;top:63.500px;font-size:11.500px;font-weight:700;color:#444">Meet</p>
<p class="tb" style="left:329px;top:103.500px">New</p>
<p class="tb" style="left:413px;top:103.500px">Upload</p>
<p class="tb" style="left:512px;top:103.500px">Sync</p>
<p class="tb" style="left:579px;top:103.500px">Copy link</p>
<p class="tb" style="left:670px;top:103.500px">Download</p>
<p class="tb" style="left:765px;top:103.500px">Add cloud storage</p>
<p class="tb" style="left:934px;top:103.500px">All Documents</p>
<p style="left:311px;top:143px;font-weight:700;color:#333">New LT Toolkit notes</p>
<p class="hd" style="left:358.500px;top:184px;font-size:9.500px!important">Name</p>
<p class="hd" style="left:598.500px;top:184px">Modified</p>
<p class="hd" style="left:718.500px;top:184px">Modified By</p>
<p class="fl" style="left:358.500px;top:215.500px">ALT CMALT Prospectus 2019.pdf</p>
<p class="fl" style="left:358.500px;top:250.500px">BDCP-LTMapping-110319.pdf</p>
<p class="fl" style="left:358.500px;top:285.500px">JFL0066F_DIGIGAP_MOD_IND_FRAME.PDF</p>
<p class="fl" style="left:358.500px;top:321px">new-lt-toolkit-3952.pdf</p>
<p class="fl" style="left:358.500px;top:356px">tech-profile-checklist.pdf</p>
<p class="fl" style="left:598.500px;top:215.500px">March 5</p>
<p class="fl" style="left:598.500px;top:250.500px">March 5</p>
<p class="fl" style="left:598.500px;top:285.500px">March 5</p>
<p class="fl" style="left:598.500px;top:321px">March 5</p>
<p class="fl" style="left:598.500px;top:356px">March 5</p>
<p class="fl" style="left:718.500px;top:215.500px">Annabel TRESHAN...</p>
<p class="fl" style="left:718.500px;top:250.500px">Annabel TRESHAN...</p>
<p class="fl" style="left:718.500px;top:285.500px">Annabel TRESHAN...</p>
<p class="fl" style="left:718.500px;top:321px">Annabel TRESHAN...</p>
<p class="fl" style="left:718.500px;top:356px">Annabel TRESHAN...</p>

<!-- Chrome text -->
<p class="tab" style="left:1047px;top:9.500px">Page 2 |</p>
<p class="tab" style="left:1108px;top:9.500px">(99) Minecraft</p>
<p class="tab" style="left:1168px;top:9.500px">glinner, b</p>
<p class="tab" style="left:1228px;top:9.500px">2 ways to</p>
<p class="tab" style="left:1289px;top:9.500px">Grading</p>
<p class="tab" style="left:1349px;top:9.500px">Bb Collab</p>
<p class="tab" style="left:1409px;top:9.500px">First LTT</p>
<p class="tab" style="left:1469px;top:9.500px">Site Cont</p>
<p class="tab" style="left:1530px;top:9.500px">Edit Post</p>
<p class="tab" style="left:1589px;top:9.500px">Copying</p>
<p class="tab" style="left:1649px;top:9.500px">list - Goo</p>
<p class="tab" style="left:1709px;top:9.500px">Checklist</p>
<p class="tab" style="left:1768px;top:9.500px">2 ways to</p>
<p class="tab" style="left:1828px;top:9.500px">Site Cont</p>
<p class="tab" style="left:1888px;top:9.500px;color:#666!important">Team of me</p>
<p style="left:1117px;top:28.500px;font-size:7.300px;color:#888"><span style="color:#333">uoe.sharepoint.com</span>/sites/Group2ProfessionalLearningCommunity/Shared%20Documents/Forms/AllItems.aspx</p>

<!-- SharePoint text -->
<p style="left:1054px;top:51px;font-size:9.500px;font-weight:700;color:#fff">SharePoint</p>
<p style="left:1435px;top:51.500px;font-size:8px;color:#555">Search this library</p>
<p style="left:1087px;top:87.500px;font-size:12.600px;color:#444">Team of me</p>
<p style="left:1086px;top:104px;font-size:7.500px;color:#999">Private group</p>
<p style="left:1998px;top:82px;font-size:7.500px;color:#888">Following</p>
<p style="left:1997px;top:103px;font-size:7.500px;color:#777">1 member</p>
<p class="nav" style="top:134px">Home</p>
<p class="nav" style="top:157.500px">Conversations</p>
<p class="nav" style="top:181px;color:#555!important">Documents</p>
<p class="nav" style="top:204.500px">Shared with us</p>
<p class="nav" style="top:228px">Notebook</p>
<p class="nav" style="top:251.500px">Pages</p>
<p class="nav" style="top:275px">Test Laptop Bookings</p>
<p class="nav" style="top:298.500px">LT Videos</p>
<p class="nav" style="top:322px">LT Podcasts</p>
<p class="nav" style="top:345.500px">LT Teams Links</p>
<p class="nav" style="top:369px">LT LinkedIn Courses</p>
<p class="nav" style="top:392.500px">LT Training Links</p>
<p class="nav" style="top:416px">Site contents</p>
<p class="nav" style="top:439.500px">Recycle bin</p>
<p class="nav" style="top:463px;color:#2f9496!important">Edit</p>
<p style="left:1033px;top:540.500px;font-size:6.800px;color:#2f9496">Return to classic SharePoint</p>

<p style="left:1183px;top:133.500px;font-size:7.500px;font-weight:700;color:#fff">New</p>
<p class="cmd" style="left:1239px;top:133.500px">Upload</p>
<p class="cmd" style="left:1294.700px;top:133.500px">Edit in grid view</p>
<p class="cmd" style="left:1369px;top:133.500px">Sync</p>
<p class="cmd" style="left:1405px;top:133.500px">Add shortcut to OneDrive</p>
<p class="cmd" style="left:1511px;top:133.500px">Export to Excel</p>
<p class="cmd" style="left:1581px;top:133.500px">Power Apps</p>
<p class="cmd" style="left:1652px;top:133.500px">Automate</p>
<p class="cmd" style="left:1913.500px;top:133.500px">All Documents</p>
<p style="left:1163px;top:173.500px;font-size:10.700px;color:#555">Documents</p>
<p class="nm" style="top:202px;font-weight:700;color:#777!important">Name</p>
<p class="cmd" style="left:1376px;top:202px;font-weight:700;color:#777!important;font-size:7.200px!important">Modified</p>
<p class="cmd" style="left:1456px;top:202px;font-weight:700;color:#777!important;font-size:7.200px!important">Modified By</p>
<p class="cmd" style="left:1544px;top:202px;font-weight:700;color:#777!important;font-size:7.200px!important">Add column</p>

<p class="nm" style="top:225px">Admin to do</p><p class="dt" style="top:224px">July 24, 2020</p><p class="by" style="top:224px">Annabel TRESHANSKY</p>
<p class="nm" style="top:248px">Blog to-do</p><p class="dt" style="top:247px">June 4, 2020</p><p class="by" style="top:247px">Annabel TRESHANSKY</p>
<p class="nm" style="top:271px">DE Team Emails</p><p class="dt" style="top:270px">July 8, 2020</p><p class="by" style="top:270px">Annabel TRESHANSKY</p>
<p class="nm" style="top:293.500px">Fitness</p><p class="dt" style="top:293px">July 24, 2020</p><p class="by" style="top:293px">Annabel TRESHANSKY</p>
<p class="nm" style="top:316.500px">Gaelic</p><p class="dt" style="top:316px">February 17</p><p class="by" style="top:316px">Annabel TRESHANSKY</p>
<p class="nm" style="top:339.500px">General</p><p class="dt" style="top:339px">February 10, 2020</p><p class="by" style="top:339px">Annabel TRESHANSKY</p>
<p class="nm" style="top:362.500px">How-Tos</p><p class="dt" style="top:362px">December 8, 2020</p><p class="by" style="top:362px">Annabel TRESHANSKY</p>
<p class="nm" style="top:385.500px">Kids</p><p class="dt" style="top:385px">December 8, 2020</p><p class="by" style="top:385px">Annabel TRESHANSKY</p>
<p class="nm" style="top:408.500px">Leave dates</p><p class="dt" style="top:408px">July 13, 2020</p><p class="by" style="top:408px">Annabel TRESHANSKY</p>
<p class="nm" style="top:431.500px">Look into later</p><p class="dt" style="top:431px">July 17, 2020</p><p class="by" style="top:431px">Annabel TRESHANSKY</p>
<p class="nm" style="top:454.500px">Microsoft</p><p class="dt" style="top:454px">February 22</p><p class="by" style="top:454px">Annabel TRESHANSKY</p>
<p class="nm" style="top:477.500px">Mondays</p><p class="dt" style="top:476.500px">March 2</p><p class="by" style="top:476.500px">Annabel TRESHANSKY</p>
<p class="nm" style="top:500.500px">New LT Toolkit notes</p><p class="dt" style="top:499.500px">March 5</p><p class="by" style="top:499.500px">Annabel TRESHANSKY</p>
<p class="nm" style="top:523px">Notes</p><p class="dt" style="top:522.500px">October 9, 2020</p><p class="by" style="top:522.500px">Annabel TRESHANSKY</p>
<p class="nm" style="top:546px">Other stuff</p><p class="dt" style="top:545.500px">July 24, 2020</p><p class="by" style="top:545.500px">Annabel TRESHANSKY</p>

<!-- panel -->
<p style="left:1904px;top:157.500px;font-size:7.800px;color:#555">Documents</p>
<p style="left:1941px;top:188px;font-size:6.500px;color:#666">More details</p>
<p style="left:1887px;top:206px;font-size:8.500px;color:#555">Activity</p>
<p style="left:1887px;top:226.500px;font-size:7px;color:#777">Two weeks ago</p>
<p class="c" style="top:246.500px">You renamed <b>~tmpA1_new-lt-</b></p>
<p class="c" style="top:255px"><b>toolkit-3952.pdf</b> to <b>new-lt-</b></p>
<p class="c" style="top:263.500px"><b>toolkit-3952.pdf</b></p>
<p class="cd" style="top:272.500px">March 5</p>
<p class="c" style="top:301px">You edited <b>new-lt-toolkit-</b></p>
<p class="c" style="top:309.500px"><b>3952.pdf</b></p>
<p class="cd" style="top:318.500px">March 5</p>
<p class="c" style="top:347px">You created <b>new-lt-toolkit-</b></p>
<p class="c" style="top:355.500px"><b>3952.pdf</b> in <b>Documents</b></p>
<p class="cd" style="top:364.500px">March 5</p>
<p class="c" style="top:393px">You renamed <b>~tmp3F_ALT</b></p>
<p class="c" style="top:401.500px"><b>CMALT Prospectus 2019.pdf</b> to</p>
<p class="c" style="top:410px"><b>ALT CMALT Prospectus</b></p>
<p class="c" style="top:418.500px"><b>2019.pdf</b></p>
<p class="cd" style="top:427.500px">March 5</p>
<p class="c" style="top:455.500px">You edited <b>ALT CMALT</b></p>
<p class="c" style="top:464px"><b>Prospectus 2019.pdf</b></p>
<p class="cd" style="top:473px">March 5</p>
<p class="c" style="top:501.500px">You created <b>ALT CMALT</b></p>
<p class="c" style="top:510px"><b>Prospectus 2019.pdf</b> in</p>
<p class="c" style="top:518.500px"><b>Documents</b></p>
<p class="cd" style="top:527.500px">March 5</p>

<!-- Left taskbar -->
<div style="left:0;top:549px;width:1024px;height:27px;background:#1b1b1b"></div>
<div style="left:32px;top:549px;width:229px;height:27px;background:#f2f2f2"></div>
<div style="left:378px;top:549px;width:26px;height:27px;background:#3d3d3d"></div>
<p style="left:59px;top:563px;font-size:9.700px;color:#444">Type here to search</p>
<p style="left:948px;top:556.500px;font-size:8px;color:#e6e6e6;width:32px;text-align:center">00:03</p>
<p style="left:944px;top:569.500px;font-size:8px;color:#e6e6e6;width:40px;text-align:center">19/03/2021</p>

<!-- Right taskbar -->
<div style="left:1024px;top:554px;width:1024px;height:22px;background:#1b1b1b"></div>
<div style="left:1180px;top:554px;width:26px;height:22px;background:#3d3d3d"></div>
<p style="left:2014px;top:560.500px;font-size:6.500px;color:#e6e6e6;width:30px;text-align:center">00:03</p>
<p style="left:2010px;top:570px;font-size:6.500px;color:#e6e6e6;width:38px;text-align:center">19/03/2021</p>

<svg width="2048" height="576" viewBox="0 0 2048 576">
<!-- underlines -->
<g fill="#76b9ed">
<rect x="330" y="574.500" width="19" height="1.500"/><rect x="356" y="574.500" width="19" height="1.500"/><rect x="378" y="574.500" width="26" height="1.500"/><rect x="509" y="574.500" width="19" height="1.500"/><rect x="635" y="574.500" width="19" height="1.500"/><rect x="761" y="574.500" width="19" height="1.500"/><rect x="786" y="574.500" width="19" height="1.500"/><rect x="811" y="574.500" width="19" height="1.500"/><rect x="836" y="574.500" width="19" height="1.500"/>
<rect x="1130" y="574.500" width="21" height="1.500"/><rect x="1157" y="574.500" width="21" height="1.500"/><rect x="1180" y="574.500" width="26" height="1.500"/><rect x="1313" y="574.500" width="20" height="1.500"/><rect x="1444" y="574.500" width="20" height="1.500"/><rect x="1574" y="574.500" width="21" height="1.500"/><rect x="1600" y="574.500" width="21" height="1.500"/><rect x="1626" y="574.500" width="21" height="1.500"/><rect x="1652" y="574.500" width="21" height="1.500"/>
</g>
<!-- left bar system icons -->
<path d="M10.500 558.500l5-.8v4.300h-5zM16.500 557.500l5.500-.9V562h-5.500zM10.500 563h5v4.300l-5-.8zM16.500 563H22v5.400l-5.500-.9z" fill="#fff"/>
<circle cx="46" cy="560" r="3.800" fill="none" stroke="#333" stroke-width="1.100"/><path d="M43 563l-3.500 3.500" stroke="#333" stroke-width="1.200"/>
<circle cx="277" cy="562.500" r="4.500" fill="none" stroke="#fff" stroke-width="1.500"/>
<path d="M304 558h6v9h-6M312 557v11M314.500 558v2M314.500 562v2M314.500 566v2" stroke="#ddd" fill="none" stroke-width="1.100"/>

<use href="#t-exp" x="331" y="554" width="17" height="17"/><use href="#t-out" x="357" y="554" width="17" height="17"/><use href="#t-tea" x="382" y="554" width="18" height="18"/><use href="#t-vs" x="408" y="554" width="17" height="17"/><use href="#t-pur" x="434" y="554" width="16" height="16"/><use href="#t-git" x="459" y="554" width="17" height="17"/><use href="#t-cal" x="484" y="554" width="17" height="17"/><use href="#t-chr" x="510" y="554" width="17" height="17"/><use href="#t-ato" x="536" y="554" width="17" height="17"/><use href="#t-ter" x="560" y="554" width="17" height="17"/><use href="#t-too" x="586" y="554" width="17" height="17"/><use href="#t-cal2" x="610" y="554" width="17" height="17"/><use href="#t-pai" x="636" y="554" width="17" height="17"/><use href="#t-ffx" x="661" y="554" width="17" height="17"/><use href="#t-ope" x="686" y="554" width="17" height="17"/><use href="#t-net" x="711" y="554" width="17" height="17"/><use href="#t-edg" x="737" y="554" width="17" height="17"/><use href="#t-ora" x="762" y="554" width="17" height="17"/><use href="#t-wrd" x="787" y="554" width="17" height="17"/><use href="#t-pho" x="812" y="554" width="17" height="17"/><use href="#t-not" x="837" y="554" width="17" height="17"/>
<!-- tray -->
<path d="M863 565l4.500-4.500 4.500 4.500" stroke="#ddd" fill="none" stroke-width="1.100"/>
<path d="M879 566a2.500 2.500 0 0 1 1-5 3.500 3.500 0 0 1 6.500-.5 2.800 2.800 0 0 1 2 5.500z" fill="#1a8fe3"/>
<rect x="895" y="560" width="10" height="6" fill="#ddd"/>
<path d="M910 567a6 6 0 0 1 6-6M912.500 567a3.500 3.500 0 0 1 3.500-3.500" stroke="#aaa" fill="none"/>
<path d="M927 560.500h3l2.500-2v9l-2.500-2h-3zM934 560a4 4 0 0 1 0 6" stroke="#ccc" fill="none"/>
<path d="M997 557h11v9h-6l-2 3v-3h-3z" fill="#eee"/><circle cx="1007" cy="567.500" r="5.500" fill="#444" stroke="#888" stroke-width=".5"/><text x="1003" y="570.500" font-size="8" fill="#fff" font-family="Liberation Sans">23</text>

<!-- right bar system icons -->
<path d="M1032.500 561.500l4-.7v3.500h-4zM1037.500 560.600l4.500-.8v4.500h-4.500zM1032.500 565h4v3.500l-4-.7zM1037.500 565h4.500v4.500l-4.500-.8z" fill="#fff"/>
<circle cx="1063" cy="564" r="3.200" fill="none" stroke="#ccc"/><path d="M1060.500 566.500l-3 3" stroke="#ccc"/>
<circle cx="1088" cy="565" r="3.800" fill="none" stroke="#fff" stroke-width="1.300"/>
<path d="M1109 561h5v8h-5M1116 560v10M1118 561v2M1118 565v2" stroke="#ddd" fill="none"/>
<use href="#t-exp" x="1133" y="557" width="15" height="15"/><use href="#t-out" x="1159" y="557" width="15" height="15"/><use href="#t-tea" x="1185" y="557" width="16" height="16"/><use href="#t-vs" x="1212" y="557" width="15" height="15"/><use href="#t-pur" x="1238" y="558" width="14" height="14"/><use href="#t-git" x="1264" y="558" width="14" height="14"/><use href="#t-cal" x="1290" y="558" width="15" height="15"/><use href="#t-chr" x="1316" y="558" width="14" height="14"/><use href="#t-ato" x="1343" y="558" width="14" height="14"/><use href="#t-ter" x="1368" y="558" width="15" height="15"/><use href="#t-too" x="1395" y="558" width="15" height="15"/><use href="#t-cal2" x="1421" y="558" width="15" height="15"/><use href="#t-pai" x="1447" y="558" width="15" height="15"/><use href="#t-ffx" x="1473" y="558" width="15" height="15"/><use href="#t-ope" x="1499" y="558" width="15" height="15"/><use href="#t-net" x="1526" y="558" width="15" height="15"/><use href="#t-edg" x="1551" y="558" width="14" height="14"/><use href="#t-ora" x="1578" y="558" width="14" height="14"/><use href="#t-wrd" x="1604" y="558" width="15" height="15"/><use href="#t-pho" x="1630" y="558" width="15" height="15"/><use href="#t-not" x="1656" y="558" width="15" height="15"/>
</svg>
</div></body></html>
